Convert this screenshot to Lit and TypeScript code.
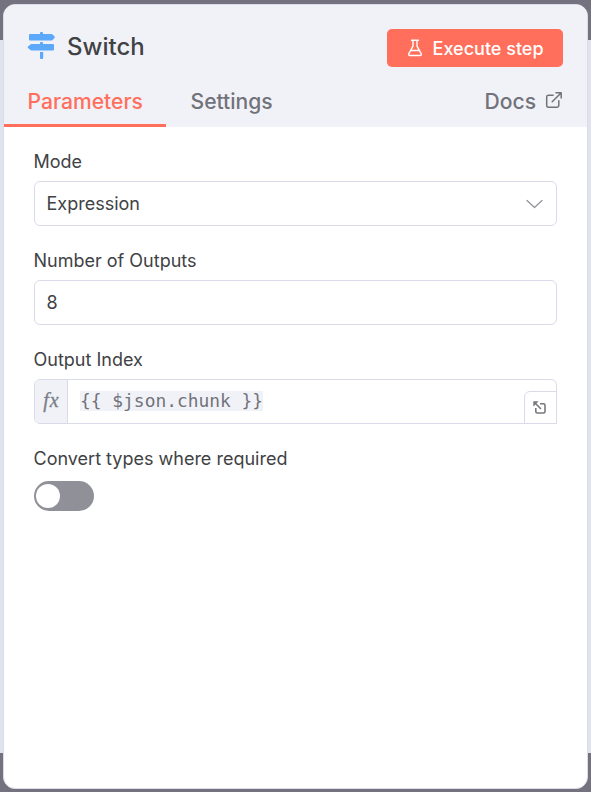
import { LitElement, html, css } from "lit";
import { customElement, state } from "lit/decorators.js";

@customElement("node-header")
class NodeHeader extends LitElement {
  static styles = css`
    :host { display: block; height: 122px; background: #f1f2f8; color: #414244; }
    * { box-sizing: border-box; }
    .title-row { display: flex; align-items: center; height: 84px; padding: 0 24px 0 23px; }
    .node-icon { width: 29px; height: 29px; margin-top: -1px; display: block; }
    .title { margin-left: 11px; font-size: 24px; line-height: 30px; font-weight: 470; }
    .execute { margin-left: auto; margin-top: 2px; width: 176px; height: 38px; padding: 1px 0 0 20px; border: 0; border-radius: 5px;
      background: #ff6f5c; color: #fff; font: 550 18px/37px Inter, sans-serif; display: flex; align-items: center; white-space: nowrap; }
    .execute svg { width: 16px; height: 18px; margin: -1px 9.600px 0 0; }
    .tabs { display: flex; height: 38px; font-size: 21.100px; line-height: 25px; font-weight: 450; color: #71727a; }
    .tab { height: 38px; padding: 0 24.500px; white-space: nowrap; }
    .active { width: 162px; padding: 0 23.500px; color: #ff6f5c; border-bottom: 3px solid #ff6f5c; }
    .docs { margin-left: auto; display: flex; padding-right: 24px; }
    .docs svg { width: 18px; height: 18px; margin: 2px 0 0 9px; }
  `;
  render() {
    return html`
      <div class="title-row">
        <svg class="node-icon" viewBox="0 0 29 29" fill="#5ca8fa">
          <path d="M13 2V1q0-1 1-1h1q1 0 1 1v1h8.600q.6 0 1 .4l2 2q.6.7 0 1.400l-2 2.200q-.4.4-1 .4H3Q2 8.500 2 7.500V3Q2 2 3 2ZM13 12v-1q0-1 1-1h1q1 0 1 1v1h10q1 0 1 1v4.500q0 1-1 1H4.400q-.6 0-1-.4l-2.400-2.200q-.7-.7 0-1.400l2.400-2.100q.4-.4 1-.4ZM13 20h3.200v6q0 1-1 1H14q-1 0-1-1Z" />
        </svg>
        <span class="title">Switch</span>
        <button class="execute">
          <svg viewBox="0 0 16 18" fill="none" stroke="#fff" stroke-width="1.400" stroke-linecap="round" stroke-linejoin="round">
            <path d="M4.500 1.300h7M6 1.500v5.700L2 14.300q-1 2.200 1.100 2.200h9.800q2.100 0 1.100-2.200L10 7.200V1.500M4 11.500h8" />
          </svg>Execute step
        </button>
      </div>
      <div class="tabs">
        <div class="tab active">Parameters</div>
        <div class="tab">Settings</div>
        <div class="docs">Docs
          <svg viewBox="0 0 18 18" fill="none" stroke="#71727a" stroke-width="1.500" stroke-linecap="round" stroke-linejoin="round">
            <path d="M11 1.800h5.200V7M16 2 7.200 10.800M13.800 9.800v4.700q0 1.700-1.700 1.700H3.400q-1.700 0-1.700-1.700V5.900q0-1.700 1.700-1.700h4.700" />
          </svg>
        </div>
      </div>`;
  }
}

@customElement("app-root")
class AppRoot extends LitElement {
  @state() private convertTypes = false;

  static styles = css`
    :host { display: block; height: 792px; overflow: hidden; font-family: Inter, sans-serif; color: #414244;
      background: linear-gradient(#757280 0 40px, #dfe3ed 40px 753px, #757280 753px); padding: 4px 3px 3px; box-sizing: border-box; }
    * { box-sizing: border-box; }
    .panel { height: 785px; border: 1px solid #dadcea; border-radius: 12px; background: #fff; overflow: hidden; }
    .fields { padding: 21px 30px; }
    .field { height: 99px; }
    .label { font-size: 18px; line-height: 28px; height: 33px; margin-left: -0.5px; white-space: nowrap; }
    .input { height: 45px; border: 1px solid #d9dbe8; border-radius: 6px; font-size: 18px; line-height: 43px; padding: 0 13px 0 11.500px;
      display: flex; align-items: center; background: #fff; overflow: hidden; }
    .chevron { margin-left: auto; width: 18px; height: 12px; }
    .expression { padding: 0; align-items: stretch; border-bottom-right-radius: 0; }
    .fx { width: 33px; background: #f1f2f8; border-right: 1px solid #d9dbe8; text-align: center; color: #7b7e87;
      font: italic 20px/41px "Liberation Serif", serif; letter-spacing: 1px; padding-left: 1px; -webkit-text-stroke: 0.3px #7b7e87; }
    .code { margin: 11px 0 0 12px; height: 20px; background: #f1f2f8; color: #71727a; font: 17.900px/20px "DejaVu Sans Mono", monospace; white-space: pre; }
    .expand { margin: 11px -1px 0 auto; width: 33px; height: 33px; border: 1px solid #d9dbe8; border-radius: 6px 0 0 0; display: flex; align-items: center; justify-content: center; }
    .expand svg { width: 13px; height: 13px; margin-right: 2px; }
    .switch { width: 60px; height: 30px; margin-top: 3px; border: 0; border-radius: 15px; background: #909198; padding: 0 2px; display: flex; align-items: center; }
    .switch.on { justify-content: flex-end; background: #ff6f5c; }
    .knob { width: 24px; height: 24px; border-radius: 50%; background: #fff; }
  `;
  render() {
    return html`
      <div class="panel">
        <node-header></node-header>
        <div class="fields">
          <div class="field">
            <div class="label">Mode</div>
            <div class="input">Expression
              <svg class="chevron" viewBox="0 0 18 12" fill="none" stroke="#909198" stroke-width="1.200" stroke-linecap="round" stroke-linejoin="round"><path d="m2 2.500 7.500 7 7.500-7" /></svg>
            </div>
          </div>
          <div class="field">
            <div class="label">Number of Outputs</div>
            <div class="input">8</div>
          </div>
          <div class="field">
            <div class="label">Output Index</div>
            <div class="input expression">
              <span class="fx">fx</span><span class="code">{{ $json.chunk }}</span>
              <span class="expand">
                <svg viewBox="0 0 13 13" fill="none" stroke="#77787e" stroke-width="1.600" stroke-linejoin="round">
                  <path d="M7 2.800h3.500q1.500 0 1.500 1.500v6.200q0 1.500-1.500 1.500H4.300q-1.500 0-1.500-1.500V7M2 2l6 6" />
                  <path d="M.6 5V.6H5Z" fill="#77787e" stroke-width=".6" />
                </svg>
              </span>
            </div>
          </div>
          <div class="field">
            <div class="label">Convert types where required</div>
            <button class="switch ${this.convertTypes ? "on" : ""}" @click=${() => (this.convertTypes = !this.convertTypes)}><span class="knob"></span></button>
          </div>
        </div>
      </div>`;
  }
}
